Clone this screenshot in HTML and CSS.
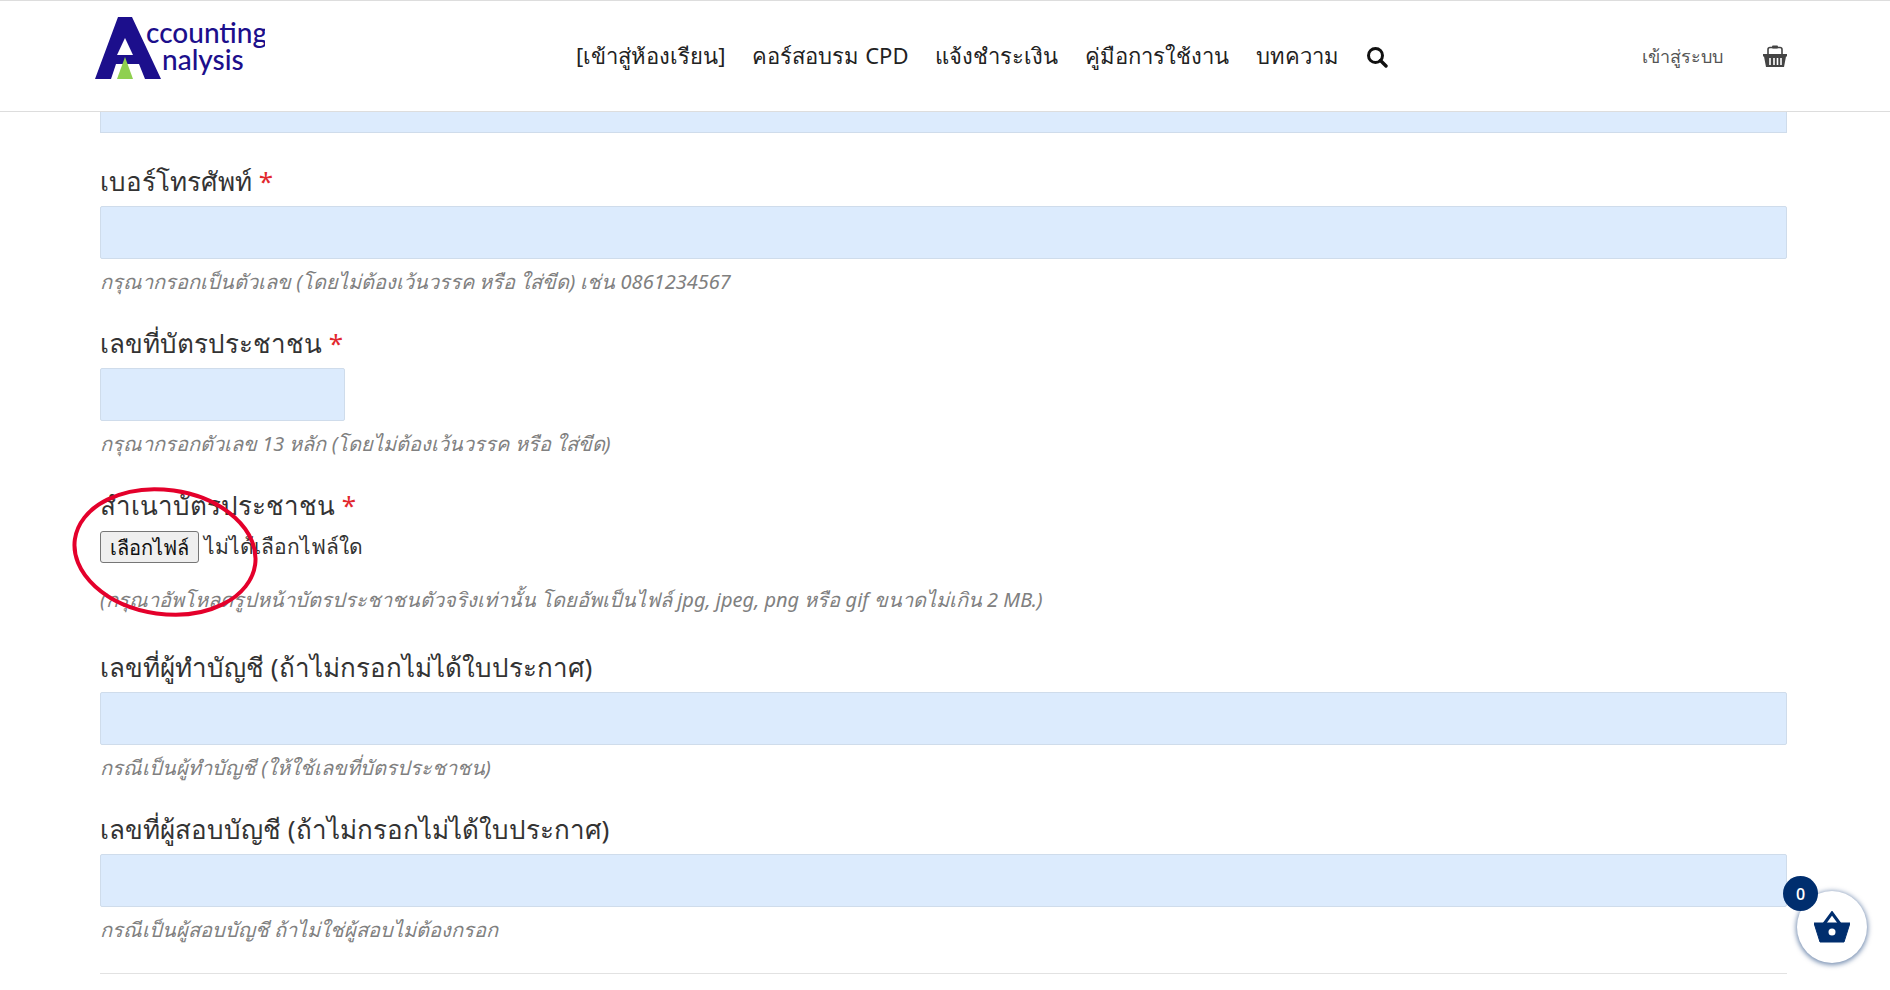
FILE: index.html
```html
<!DOCTYPE html>
<html lang="th">
<head>
    <meta charset="UTF-8">
    <meta name="viewport" content="width=device-width, initial-scale=1.0">
    <title>Accounting Analysis</title>
    <link rel="stylesheet" href="styles.css">
</head>
<body>

    <header class="site-header">
        <a class="logo" href="#">
            <svg width="170" height="72" viewBox="0 0 170 72">
                <polygon points="23,0 37,0 66,62 50,62 44,47 21,47 16,62 0,62" fill="#1c0f8c"></polygon>
                <polygon points="30,21 38,38 22,38" fill="#fff"></polygon>
                <polygon points="30,40 38,62 22,62" fill="#8fd04f"></polygon>
                <text x="51" y="26" class="logo-text">ccounting</text>
                <text x="67" y="53" class="logo-text">nalysis</text>
            </svg>
        </a>
        <nav class="main-nav">
            <a href="#">[เข้าสู่ห้องเรียน]</a>
            <a href="#">คอร์สอบรม CPD</a>
            <a href="#">แจ้งชำระเงิน</a>
            <a href="#">คู่มือการใช้งาน</a>
            <a href="#">บทความ</a>
            <svg class="search-icon" width="22" height="22" viewBox="0 0 22 22">
                <circle cx="9.5" cy="9.5" r="7" fill="none" stroke="#111" stroke-width="3"></circle>
                <line x1="14.5" y1="14.5" x2="20" y2="20" stroke="#111" stroke-width="3.4" stroke-linecap="round"></line>
            </svg>
        </nav>
        <div class="header-right">
            <a class="login-link" href="#">เข้าสู่ระบบ</a>
            <svg width="24" height="24" viewBox="0 0 24 24">
                <path d="M5 10V5.5Q5 3.5 7 3.5H17Q19 3.5 19 5.5V10" fill="none" stroke="#444" stroke-width="1.6"></path>
                <rect x="9" y="1.5" width="6" height="3" rx="1" fill="#444"></rect>
                <path d="M0 10H24V12.5H23L21 23H3L1 12.5H0Z" fill="#444"></path>
                <path d="M7 14V21M11 14V21M14.5 14V21M18 14V21" stroke="#fff" stroke-width="1.6"></path>
            </svg>
        </div>
    </header>

    <main class="form-wrap">
        <div class="field-stub"></div>

        <div class="field">
            <label class="field-label">เบอร์โทรศัพท์ <span class="req">*</span></label>
            <input type="text" class="text-input">
            <p class="field-help">กรุณากรอกเป็นตัวเลข (โดยไม่ต้องเว้นวรรค หรือ ใส่ขีด) เช่น 0861234567</p>
        </div>

        <div class="field">
            <label class="field-label">เลขที่บัตรประชาชน <span class="req">*</span></label>
            <input type="text" class="text-input short">
            <p class="field-help">กรุณากรอกตัวเลข 13 หลัก (โดยไม่ต้องเว้นวรรค หรือ ใส่ขีด)</p>
        </div>

        <div class="field file-field">
            <label class="field-label">สำเนาบัตรประชาชน <span class="req">*</span></label>
            <div class="file-row">
                <button type="button" class="file-button">เลือกไฟล์</button>
                <span class="file-name">ไม่ได้เลือกไฟล์ใด</span>
            </div>
            <p class="field-help">(กรุณาอัพโหลดรูปหน้าบัตรประชาชนตัวจริงเท่านั้น โดยอัพเป็นไฟล์ jpg, jpeg, png หรือ gif ขนาดไม่เกิน 2 MB.)</p>
            <svg class="red-circle" width="190" height="136" viewBox="0 0 190 136">
                <ellipse cx="93" cy="68" rx="91" ry="62" fill="none" stroke="#e4002b" stroke-width="4" transform="rotate(8 93 68)"></ellipse>
            </svg>
        </div>

        <div class="field">
            <label class="field-label">เลขที่ผู้ทำบัญชี (ถ้าไม่กรอกไม่ได้ใบประกาศ)</label>
            <input type="text" class="text-input">
            <p class="field-help">กรณีเป็นผู้ทำบัญชี (ให้ใช้เลขที่บัตรประชาชน)</p>
        </div>

        <div class="field">
            <label class="field-label">เลขที่ผู้สอบบัญชี (ถ้าไม่กรอกไม่ได้ใบประกาศ)</label>
            <input type="text" class="text-input">
            <p class="field-help">กรณีเป็นผู้สอบบัญชี ถ้าไม่ใช่ผู้สอบไม่ต้องกรอก</p>
        </div>

        <hr class="divider">
    </main>

    <div class="cart-float">
        <span class="cart-count">0</span>
        <svg width="36" height="32" viewBox="0 0 36 32">
            <path d="M10 13L18 2L26 13" fill="none" stroke="#002e6e" stroke-width="3"></path>
            <path d="M0 12H36L30 31H6Z" fill="#002e6e" stroke="#002e6e" stroke-linejoin="round"></path>
            <circle cx="18" cy="21" r="3.5" fill="#fff"></circle>
        </svg>
    </div>

</body>
</html>
```

FILE: styles.css
```css
* {
    box-sizing: border-box;
}

html, body {
    height: 990px;
    overflow: hidden;
}

body {
    margin: 0;
    font-family: "Noto Sans", "Open Sans", "DejaVu Sans", sans-serif;
    background-color: #fff;
    color: #333;
}

a {
    color: inherit;
    text-decoration: none;
}

.site-header {
    height: 112px;
    display: flex;
    align-items: center;
    padding: 0 103px 0 95px;
    background-color: #fff;
    border-top: 1px solid #ddd;
    border-bottom: 1px solid #ddd;
}

.logo {
    display: flex;
    width: 481px;
    margin-top: -7px;
}

.logo-text {
    font-family: "Lato", sans-serif;
    font-size: 28px;
    font-weight: 500;
    fill: #1c0f8c;
}

.main-nav {
    display: flex;
    align-items: center;
    gap: 27px;
    font-size: 22px;
    color: #222;
}

.search-icon {
    margin-top: 2px;
}

.header-right {
    margin-left: auto;
    display: flex;
    align-items: center;
    gap: 40px;
}

.login-link {
    font-size: 18px;
    color: #555;
}

.form-wrap {
    padding: 0 103px 0 100px;
}

.field-stub {
    height: 21px;
    background-color: #dcebfd;
    border: 1px solid #cfdceb;
    border-top: none;
    margin-bottom: 30px;
}

.field {
    position: relative;
    height: 162px;
}

.field-label {
    display: block;
    height: 43px;
    font-size: 26px;
    line-height: 36px;
    color: #333;
}

.req {
    color: #e2282e;
}

.text-input {
    display: block;
    width: 100%;
    height: 53px;
    background-color: #dcebfd;
    border: 1px solid #cfdceb;
    border-radius: 2px;
    outline: none;
}

.text-input.short {
    width: 245px;
}

.field-help {
    margin: 9px 0 0;
    font-size: 20px;
    line-height: 28px;
    font-style: italic;
    color: #808080;
}

.file-row {
    display: flex;
    align-items: center;
    gap: 5px;
    height: 33px;
    margin-top: 0;
    font-size: 21px;
}

.file-button {
    width: 99px;
    height: 32px;
    padding: 0;
    font-family: inherit;
    font-size: 20px;
    color: #111;
    background-color: #efefef;
    border: 1px solid #767676;
    border-radius: 3px;
}

.file-field .field-help {
    margin-top: 23px;
}

.red-circle {
    position: absolute;
    left: -28px;
    top: -3px;
}

.divider {
    height: 1px;
    margin: 0;
    border: none;
    background-color: #e2e2e2;
}

.cart-float {
    position: fixed;
    left: 1797px;
    top: 891px;
    width: 70px;
    height: 72px;
    display: flex;
    align-items: center;
    justify-content: center;
    background-color: #fff;
    border-radius: 50%;
    box-shadow: 0 1px 5px 1px rgba(0, 46, 110, 0.55);
}

.cart-count {
    position: absolute;
    left: -14px;
    top: -15px;
    width: 35px;
    height: 35px;
    display: flex;
    align-items: center;
    justify-content: center;
    font-family: "Open Sans", sans-serif;
    font-size: 16px;
    font-weight: 600;
    color: #fff;
    background-color: #002e6e;
    border-radius: 50%;
}
```
